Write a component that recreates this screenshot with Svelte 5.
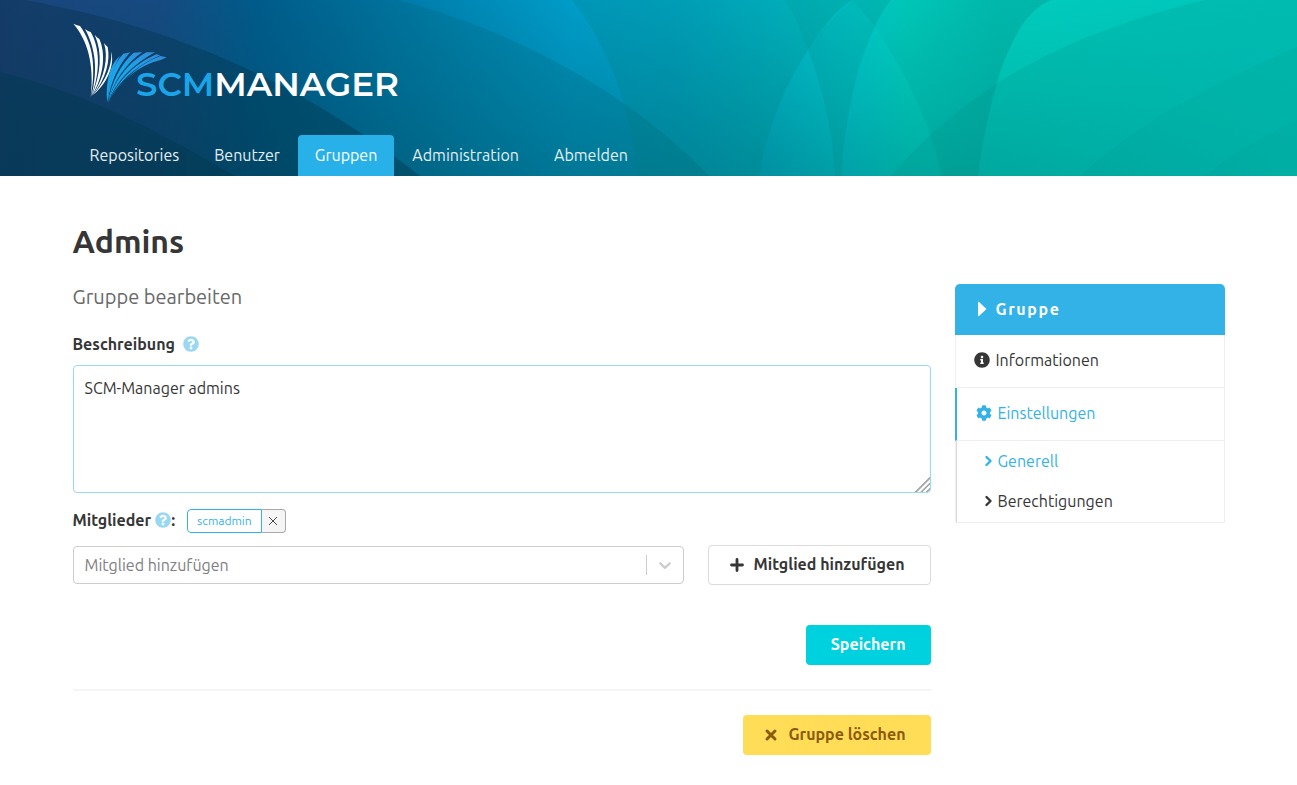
<script>
  const icons = {
    question:
      'M504 256c0 136.997-111.043 248-248 248S8 392.997 8 256C8 119.083 119.043 8 256 8s248 111.083 248 248zM262.655 90c-54.497 0-89.255 22.957-116.549 63.758-3.536 5.286-2.353 12.415 2.715 16.258l34.699 26.31c5.205 3.947 12.621 3.008 16.665-2.122 17.864-22.658 30.113-35.797 57.303-35.797 20.429 0 45.698 13.148 45.698 32.958 0 14.976-12.363 22.667-32.534 33.976C247.128 238.528 216 254.941 216 296v4c0 6.627 5.373 12 12 12h56c6.627 0 12-5.373 12-12v-1.333c0-28.462 83.186-29.647 83.186-106.667 0-58.002-60.165-102-116.531-102zM256 338c-25.365 0-46 20.635-46 46 0 25.364 20.635 46 46 46s46-20.636 46-46c0-25.365-20.635-46-46-46z',
    info: 'M256 8C119.043 8 8 119.083 8 256c0 136.997 111.043 248 248 248s248-111.003 248-248C504 119.083 392.957 8 256 8zm0 110c23.196 0 42 18.804 42 42s-18.804 42-42 42-42-18.804-42-42 18.804-42 42-42zm56 254c0 6.627-5.373 12-12 12h-88c-6.627 0-12-5.373-12-12v-24c0-6.627 5.373-12 12-12h12v-64h-12c-6.627 0-12-5.373-12-12v-24c0-6.627 5.373-12 12-12h64c6.627 0 12 5.373 12 12v100h12c6.627 0 12 5.373 12 12v24z',
    cog: 'M487.4 315.7l-42.6-24.6c4.3-23.2 4.3-47 0-70.2l42.6-24.6c4.9-2.8 7.1-8.6 5.5-14-11.1-35.6-30-67.8-54.7-94.6-3.8-4.1-10-5.1-14.8-2.3L380.8 110c-17.9-15.4-38.5-27.3-60.8-35.1V25.8c0-5.6-3.9-10.5-9.4-11.7-36.7-8.2-74.3-7.8-109.2 0-5.5 1.2-9.4 6.1-9.4 11.7V75c-22.2 7.9-42.8 19.8-60.8 35.1L88.7 85.5c-4.9-2.8-11-1.9-14.8 2.3-24.7 26.7-43.6 58.9-54.7 94.6-1.7 5.4.6 11.2 5.5 14L67.3 221c-4.3 23.2-4.3 47 0 70.2l-42.6 24.6c-4.9 2.8-7.1 8.6-5.5 14 11.1 35.6 30 67.8 54.7 94.6 3.8 4.1 10 5.1 14.8 2.3l42.6-24.6c17.9 15.4 38.5 27.3 60.8 35.1v49.2c0 5.6 3.9 10.5 9.4 11.7 36.7 8.2 74.3 7.8 109.2 0 5.5-1.2 9.4-6.1 9.4-11.7v-49.2c22.2-7.9 42.8-19.8 60.8-35.1l42.6 24.6c4.9 2.8 11 1.9 14.8-2.3 24.7-26.7 43.6-58.9 54.7-94.6 1.5-5.5-.7-11.3-5.6-14.1zM256 336c-44.1 0-80-35.9-80-80s35.9-80 80-80 80 35.9 80 80-35.9 80-80 80z',
  };
  const nav = ['Repositories', 'Benutzer', 'Gruppen', 'Administration', 'Abmelden'];
  let description = $state('SCM-Manager admins');
  let member = $state('');
  let members = $state(['scmadmin']);

  function addMember(event) {
    event.preventDefault();
    const name = member.trim();
    if (name && !members.includes(name)) members.push(name);
    member = '';
  }
</script>

<header>
  <svg class="backdrop" viewBox="0 0 1297 176" preserveAspectRatio="none" aria-hidden="true">
    <defs>
      <linearGradient id="sky">
        <stop offset="0" stop-color="#1f4080" />
        <stop offset=".12" stop-color="#1c4686" />
        <stop offset=".2" stop-color="#005c93" />
        <stop offset=".33" stop-color="#0080ae" />
        <stop offset=".44" stop-color="#009cc8" />
        <stop offset=".52" stop-color="#00a5c6" />
        <stop offset=".58" stop-color="#00b3c8" />
        <stop offset=".66" stop-color="#00c8cc" />
        <stop offset=".7" stop-color="#00d2c0" />
        <stop offset=".82" stop-color="#00d0bd" />
        <stop offset="1" stop-color="#00c9bd" />
      </linearGradient>
      <linearGradient id="dusk" x1="0" y1="0" x2="0" y2="1">
        <stop offset="0" stop-color="#00323f" stop-opacity="0" />
        <stop offset="1" stop-color="#00323f" stop-opacity=".28" />
      </linearGradient>
      <linearGradient id="lift">
        <stop offset="0" stop-color="#00c4ba" stop-opacity="0" />
        <stop offset=".6" stop-color="#00c4ba" stop-opacity="0" />
        <stop offset="1" stop-color="#00c4ba" stop-opacity=".85" />
      </linearGradient>
      <linearGradient id="shade">
        <stop offset="0" stop-color="#142850" />
        <stop offset=".6" stop-color="#003450" />
      </linearGradient>
      <linearGradient id="valley">
        <stop offset="0" stop-color="#007d78" stop-opacity=".06" />
        <stop offset=".7" stop-color="#007d78" stop-opacity=".26" />
      </linearGradient>
    </defs>
    <rect width="1297" height="176" fill="url(#sky)" />
    <rect width="1297" height="176" fill="url(#dusk)" />
    <rect width="1297" height="176" fill="url(#lift)" />
    <path fill="url(#shade)" opacity=".48" d="M0 0H25C190 30 310 90 420 176H0Z" />
    <path fill="#002f45" opacity=".4" d="M0 72C90 94 165 135 235 176H0Z" />
    <path fill="#005a68" opacity=".2" d="M25 0H398C510 30 625 88 709 176H0V0Z" />
    <g fill="#007d78">
      <path opacity=".2" d="M572 0C612 50 632 115 638 176H759C770 120 784 88 808 50C800 30 794 12 784 0Z" />
      <path opacity=".3" d="M784 0C794 12 800 30 808 50C820 30 835 12 852 0Z" />
      <path opacity=".18" d="M808 50C824 90 833 135 835 176H841C845 120 856 65 875 27C868 18 860 8 852 0C835 15 818 32 808 50Z" />
      <path opacity=".26" d="M852 0C860 8 868 18 875 27C879 17 885 8 891 0Z" />
      <path opacity=".14" d="M1205 0C1060 35 965 90 891 176H1297V0Z" />
      <path opacity=".07" d="M1297 47C1220 80 1140 120 1080 176H1297Z" />
      <path opacity=".05" d="M1297 120C1260 138 1230 155 1205 176H1297Z" />
    </g>
    <path fill="url(#valley)" d="M875 27C908 75 930 125 942 176H978C985 120 999 70 1009 50C1020 25 1030 10 1051 0H891C885 8 880 17 875 27Z" />
  </svg>
  <div class="container head">
    <a class="brand" href="#start" aria-label="SCM-Manager">
      <svg width="330" height="84" viewBox="0 0 330 84" aria-hidden="true">
        <defs>
          <linearGradient id="wing" x1="0" y1="1" x2="1" y2="0">
            <stop offset=".55" stop-color="#1ba5e8" />
            <stop offset="1" stop-color="#348ad8" />
          </linearGradient>
        </defs>
        <g transform="translate(-5 -5) scale(.3333)">
          <g fill="#fff">
            <path d="M16 17C57 65 80 135 68 240C84 150 77 80 36 24Q28 22 16 17Z" />
            <path d="M51 33C82 90 91 155 70 236C98 160 96 90 68 42Q60 40 51 33Z" />
            <path d="M80 50C104 105 99 165 71 235C110 170 113 105 94 63Q87 60 80 50Z" />
            <path d="M108 75C122 120 110 175 73 233C116 179 127 128 119 87Q113 82 108 75Z" />
            <path d="M130 101C132 145 114 185 76 230C124 189 139 137 130 101Z" />
          </g>
          <g fill="url(#wing)">
            <path d="M118 253C112 200 124 138 156 114C138 145 123 195 118 253Z" />
            <path d="M119 252C122 195 135 138 166 107L187 103C153 138 128 190 119 252Z" />
            <path d="M120 252C130 195 158 137 197 104L223 102C173 138 136 190 120 252Z" />
            <path d="M121 253C134 198 177 136 235 103L261 103C196 139 143 190 121 253Z" />
            <path d="M121 255C141 202 190 142 265 109L277 112C208 142 146 193 121 255Z" />
            <path d="M122 256C147 205 201 143 277 114L296 118L280 125C210 141 153 191 122 256Z" />
          </g>
        </g>
        <text class="word" x="63" y="73"><tspan fill="#1ba5e8">SCM</tspan><tspan fill="#fff">MANAGER</tspan></text>
      </svg>
    </a>
    <nav class="tabs" aria-label="Hauptnavigation">
      {#each nav as item}
        <a href="#{item}" class:current={item === 'Gruppen'}>{item}</a>
      {/each}
    </nav>
  </div>
</header>

<main class="container">
  <h1>Admins</h1>
  <div class="columns">
    <section class="content">
      <h2>Gruppe bearbeiten</h2>
      <form onsubmit={addMember}>
        <div class="label first">
          <label for="description">Beschreibung</label>
          <svg class="help" viewBox="0 0 512 512" aria-hidden="true"><path d={icons.question} /></svg>
        </div>
        <textarea id="description" bind:value={description}></textarea>

        <div class="label members">
          <label for="member">Mitglieder</label>
          <svg class="help" viewBox="0 0 512 512" aria-hidden="true"><path d={icons.question} /></svg>
          <span class="colon">:</span>
          {#each members as name, i}
            <span class="tag">
              <span class="name">{name}</span>
              <button type="button" aria-label="Entfernen" onclick={() => members.splice(i, 1)}>
                <svg width="10" height="10" viewBox="0 0 10 10"><path d="M1 1L9 9M9 1L1 9" /></svg>
              </button>
            </span>
          {/each}
        </div>
        <div class="add">
          <div class="combo">
            <input id="member" type="text" placeholder="Mitglied hinzufügen" bind:value={member} />
            <span class="arrow">
              <svg width="20" height="20" viewBox="0 0 20 20" aria-hidden="true"><path d="M4.516 7.548c0.436-0.446 1.043-0.481 1.576 0l3.908 3.747 3.908-3.747c0.533-0.481 1.141-0.446 1.574 0 0.436 0.445 0.408 1.197 0 1.615-0.406 0.418-4.695 4.502-4.695 4.502-0.217 0.223-0.502 0.335-0.787 0.335s-0.57-0.112-0.789-0.335c0 0-4.287-4.084-4.695-4.502s-0.436-1.17 0-1.615z" /></svg>
            </span>
          </div>
          <button class="button plain" type="submit">
            <svg width="16" height="16" viewBox="0 0 16 16" aria-hidden="true"><path d="M8 2.500V13.500M2.500 8H13.500" stroke="currentColor" stroke-width="2.800" stroke-linecap="round" /></svg>
            Mitglied hinzufügen
          </button>
        </div>
        <div class="actions">
          <button class="button save" type="button">Speichern</button>
        </div>
      </form>
      <hr />
      <div class="actions">
        <button class="button delete" type="button">
          <svg width="16" height="16" viewBox="0 0 16 16" aria-hidden="true"><path d="M4 4L12 12M12 4L4 12" stroke="currentColor" stroke-width="3" stroke-linecap="round" /></svg>
          Gruppe löschen
        </button>
      </div>
    </section>

    <aside>
      <p class="title">
        <svg width="10" height="16" viewBox="0 0 10 16" aria-hidden="true"><path d="M0 1.500Q0 .5 1 1L8 7.400Q8.500 8 8 8.600L1 15Q0 15.500 0 14.500Z" fill="currentColor" /></svg>
        Gruppe
      </p>
      <nav class="menu" aria-label="Gruppe">
        <a href="#info">
          <svg class="icon" viewBox="0 0 512 512" aria-hidden="true"><path d={icons.info} /></svg>
          Informationen
        </a>
        <a href="#settings" class="active">
          <svg class="icon" viewBox="0 0 512 512" aria-hidden="true"><path d={icons.cog} /></svg>
          Einstellungen
        </a>
        <div class="sub">
          {#each ['Generell', 'Berechtigungen'] as item, i}
            <a href="#{item}" class:on={i === 0}>
              <svg width="9" height="12" viewBox="0 0 9 12" aria-hidden="true"><path d="M2.500 2L6.500 6L2.500 10" fill="none" stroke="currentColor" stroke-width="2.400" stroke-linecap="round" stroke-linejoin="round" /></svg>
              {item}
            </a>
          {/each}
        </div>
      </nav>
    </aside>
  </div>
</main>

<style>
  :global(body) {
    margin: 0;
    background: #fff;
    color: #363636;
    font-family: Ubuntu, 'Open Sans', sans-serif;
    font-size: 16px;
    line-height: 24px;
  }
  .container {
    box-sizing: border-box;
    max-width: 1200px;
    margin: 0 auto;
    padding: 0 24px;
  }
  a {
    color: inherit;
    text-decoration: none;
  }
  header {
    position: relative;
    background: #00818f;
  }
  .backdrop {
    position: absolute;
    inset: 0;
    width: 100%;
    height: 100%;
  }
  .head {
    position: relative;
    padding-top: 23px;
  }
  .brand,
  .brand svg {
    display: block;
  }
  .brand {
    width: 330px;
  }
  .word {
    font-family: Montserrat, Lato, sans-serif;
    font-size: 34px;
    font-weight: 600;
  }
  .tabs {
    display: flex;
    gap: 1px;
    margin-top: 28px;
    color: #e4eef2;
  }
  .tabs a {
    padding: 8px 17px 9px;
    border-radius: 4px 4px 0 0;
  }
  .tabs .current {
    background: #28b1e8;
    color: #fff;
  }
  main.container {
    padding-bottom: 30px;
  }
  h1 {
    margin: 47px 0 0;
    font-size: 32px;
    font-weight: 700;
    line-height: 36px;
  }
  .columns {
    display: grid;
    grid-template-columns: minmax(0, 1fr) 270px;
    gap: 24px;
    align-items: start;
    margin-top: 25px;
  }
  h2 {
    margin: 0;
    color: #686868;
    font-size: 20px;
    font-weight: 400;
    line-height: 26px;
  }
  .label {
    display: flex;
    align-items: center;
    font-weight: 700;
  }
  .first {
    gap: 8px;
    margin: 22px 0 9px;
  }
  .help {
    width: 16px;
    height: 16px;
    fill: #99d8f3;
  }
  textarea {
    display: block;
    box-sizing: border-box;
    width: 100%;
    height: 128px;
    padding: 10px 11px;
    border: 1px solid #99d8f3;
    border-radius: 4px;
    outline: none;
    color: #363636;
    font: inherit;
    resize: vertical;
  }
  textarea::-webkit-resizer {
    background: linear-gradient(
      135deg,
      transparent 48%,
      #aaa 50%,
      #aaa 56%,
      transparent 58%,
      transparent 66%,
      #aaa 68%,
      #aaa 74%,
      transparent 76%,
      transparent 84%,
      #aaa 86%,
      #aaa 92%,
      transparent 94%
    );
  }
  .members {
    align-items: flex-start;
    margin-top: 16px;
  }
  .members label,
  .colon {
    line-height: 22px;
  }
  .members .help {
    margin: 3px 0 0 4px;
  }
  .tag {
    display: flex;
    height: 24px;
    margin-left: 12px;
    font-size: 12px;
    font-weight: 400;
  }
  .name {
    padding: 0 9px;
    border: 1px solid #33b2e8;
    border-radius: 4px 0 0 4px;
    color: #33b2e8;
    line-height: 22px;
  }
  .tag button {
    display: grid;
    place-items: center;
    width: 24px;
    padding: 0;
    border: 1px solid #a9a9a9;
    border-left: 0;
    border-radius: 0 4px 4px 0;
    background: #f5f5f5;
  }
  .tag path {
    stroke: #4a4a4a;
  }
  .add {
    display: flex;
    align-items: center;
    gap: 24px;
    margin-top: 12px;
  }
  .combo {
    display: flex;
    flex: 1;
    align-items: center;
    box-sizing: border-box;
    height: 38px;
    border: 1px solid #ccc;
    border-radius: 4px;
  }
  .combo input {
    flex: 1;
    min-width: 0;
    padding: 0 11px;
    border: 0;
    outline: 0;
    background: none;
    font: inherit;
  }
  .combo input::placeholder {
    color: #808080;
  }
  .arrow {
    display: flex;
    padding: 0 8px;
    border-left: 1px solid #ccc;
    fill: #ccc;
  }
  .button {
    display: flex;
    align-items: center;
    gap: 9px;
    height: 40px;
    padding: 0 25px 2px;
    border: 0;
    border-radius: 4px;
    font: inherit;
    font-weight: 700;
  }
  .button svg {
    margin-top: 2px;
  }
  .plain {
    padding: 0 25px 2px 20px;
    border: 1px solid #dbdbdb;
    background: #fff;
    color: #363636;
  }
  .save {
    background: #00d1df;
    color: #fff;
  }
  .delete {
    padding-left: 20px;
    background: #ffdd57;
    color: #8b5a0f;
  }
  .actions {
    display: flex;
    justify-content: flex-end;
  }
  form .actions {
    margin-top: 40px;
  }
  hr {
    height: 2px;
    margin: 24px 0;
    border: 0;
    background: #f5f5f5;
  }
  .title {
    display: flex;
    align-items: center;
    gap: 8px;
    margin: 0;
    padding: 13px 23px 14px;
    border-radius: 5px 5px 0 0;
    background: #33b2e8;
    color: #fff;
    font-weight: 700;
    letter-spacing: 0.1em;
  }
  .menu {
    border: 1px solid #eee;
    border-top: 0;
  }
  .menu > a {
    display: flex;
    align-items: center;
    gap: 6px;
    padding: 13px 18px 15px;
    border-bottom: 1px solid #eee;
  }
  .menu > .active {
    margin-left: -1px;
    border-left: 2px solid #33b2e8;
    padding-left: 19px;
    color: #33b2e8;
  }
  .icon {
    width: 16px;
    height: 16px;
    fill: currentColor;
  }
  .sub {
    border-left: 1px solid #dbdbdb;
  }
  .sub a {
    display: flex;
    align-items: center;
    gap: 5px;
    padding: 8px 27px;
  }
  .sub .on {
    color: #33b2e8;
  }
  .sub a + a {
    padding-bottom: 9px;
  }
</style>
